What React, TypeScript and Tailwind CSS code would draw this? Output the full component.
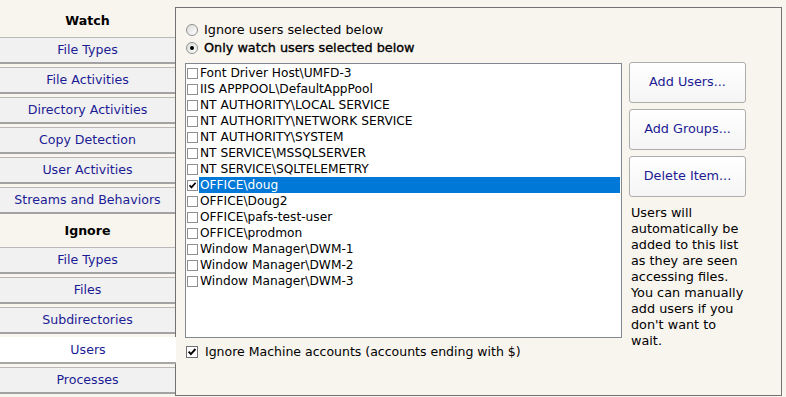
import React from "react";

const sidebar = [
  { label: "Watch", header: true },
  { label: "File Types" },
  { label: "File Activities" },
  { label: "Directory Activities" },
  { label: "Copy Detection" },
  { label: "User Activities" },
  { label: "Streams and Behaviors" },
  { label: "Ignore", header: true },
  { label: "File Types" },
  { label: "Files" },
  { label: "Subdirectories" },
  { label: "Users", selected: true },
  { label: "Processes" },
];

const users = [
  "Font Driver Host\\UMFD-3",
  "IIS APPPOOL\\DefaultAppPool",
  "NT AUTHORITY\\LOCAL SERVICE",
  "NT AUTHORITY\\NETWORK SERVICE",
  "NT AUTHORITY\\SYSTEM",
  "NT SERVICE\\MSSQLSERVER",
  "NT SERVICE\\SQLTELEMETRY",
  "OFFICE\\doug",
  "OFFICE\\Doug2",
  "OFFICE\\pafs-test-user",
  "OFFICE\\prodmon",
  "Window Manager\\DWM-1",
  "Window Manager\\DWM-2",
  "Window Manager\\DWM-3",
];

function Check({ size = 11 }: { size?: number }) {
  return (
    <svg width={size - 2} height={size - 2} viewBox="0 0 9 9">
      <path d="M1.5 4.2 L3.5 6.4 L7.6 1.8" fill="none" stroke="#000" strokeWidth="1.7" />
    </svg>
  );
}

function Radio({ on }: { on?: boolean }) {
  return (
    <span className="w-[12px] h-[12px] rounded-full border border-[#8e8f8f] bg-gradient-to-br from-[#dcdcdc] to-white flex items-center justify-center shrink-0">
      {on && <span className="w-[4px] h-[4px] rounded-full bg-black" />}
    </span>
  );
}

export default function App() {
  return (
    <div
      className="w-[786px] h-[397px] bg-[#f8f4ee] flex overflow-hidden text-[12.8px] leading-none"
      style={{ fontFamily: '"DejaVu Sans", Verdana, sans-serif' }}
    >
      {/* Sidebar */}
      <div className="w-[176px] shrink-0 pt-[6px] relative z-10 flex flex-col text-[12.6px]">
        {sidebar.map((s, i) =>
          s.header ? (
            <div key={i} className="w-[175px] h-[30px] flex items-center justify-center font-bold text-black">
              {s.label}
            </div>
          ) : (
            <div key={i} className="h-[30px] pt-px pb-[2px]">
              <div
                className={
                  "h-[27px] flex items-center justify-center pt-px text-[#1c1c94] border-t border-b-2 " +
                  (s.selected
                    ? "w-[176px] bg-white border-t-transparent border-b-[#a7a7a7]"
                    : "w-[175px] bg-[#f1f1f1] border-t-[#b9b9b9] border-b-[#a2a2a2]")
                }
              >
                {s.label}
              </div>
            </div>
          )
        )}
      </div>

      {/* Main panel */}
      <div className="-ml-px mt-[7px] w-[607px] h-[389px] border border-[#727272] bg-[#f8f4ee] pl-[9px] pt-[13px] text-black flex flex-col">
        <div className="h-[18px] flex items-center gap-[6px] pl-px">
          <Radio />
          <span>Ignore users selected below</span>
        </div>
        <div className="h-[18px] flex items-center gap-[6px] pl-px">
          <Radio on />
          <span className="[-webkit-text-stroke:0.35px_black]">Only watch users selected below</span>
        </div>

        <div className="mt-[6px] h-[275px] flex gap-[7px]">
          <div className="w-[437px] h-[275px] bg-white border border-[#828790] pt-px text-[12.2px]">
            {users.map((u, i) => {
              const sel = u === "OFFICE\\doug";
              return (
                <div key={i} className="h-[16px] flex items-center pl-px">
                  <span className="w-[11px] h-[11px] border border-[#8e8f8f] bg-white flex items-center justify-center shrink-0">
                    {sel && <Check />}
                  </span>
                  <span
                    className={
                      "h-[16px] flex items-center ml-px pl-px flex-1 mr-px " +
                      (sel ? "bg-[#0078d7] text-white" : "")
                    }
                  >
                    {u}
                  </span>
                </div>
              );
            })}
          </div>

          <div className="w-[117px] flex flex-col gap-[6px] -mt-px">
            {["Add Users...", "Add Groups...", "Delete Item..."].map((b) => (
              <button
                key={b}
                className="h-[41px] w-[117px] shrink-0 border border-[#adadad] rounded-[3px] bg-gradient-to-b from-white to-[#f5f5f5] text-[#1c1c94] flex items-center justify-center"
              >
                {b}
              </button>
            ))}
            <p className="pl-[2px] pt-[2px] leading-[16px] text-black whitespace-nowrap">
              Users will
              <br />
              automatically be
              <br />
              added to this list
              <br />
              as they are seen
              <br />
              accessing files.
              <br />
              You can manually
              <br />
              add users if you
              <br />
              don't want to
              <br />
              wait.
            </p>
          </div>
        </div>

        <div className="mt-[7px] h-[14px] flex items-center gap-[7px] pl-px">
          <span className="w-[12px] h-[12px] border border-[#707070] bg-white flex items-center justify-center">
            <Check size={12} />
          </span>
          <span className="text-[12.5px]">Ignore Machine accounts (accounts ending with $)</span>
        </div>
      </div>
    </div>
  );
}
